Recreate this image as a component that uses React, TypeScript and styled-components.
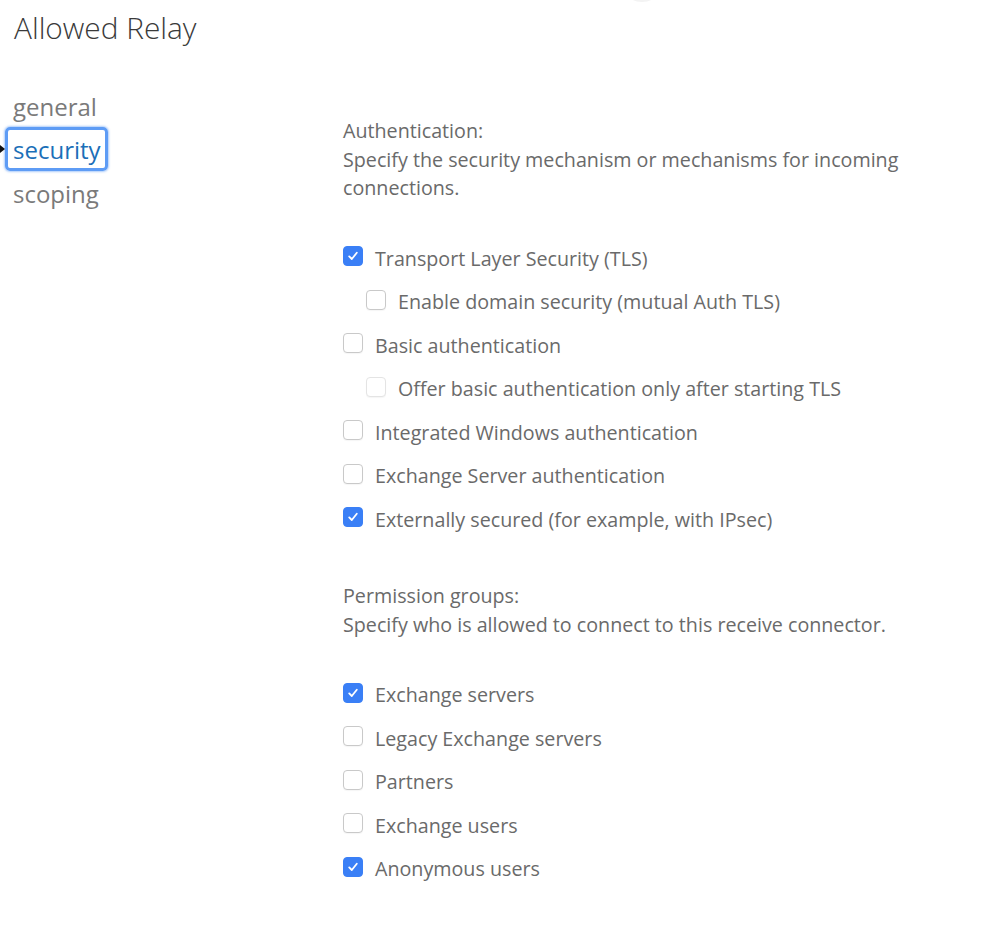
import React from "react";
import styled, { createGlobalStyle } from "styled-components";

const Global = createGlobalStyle`
  html, body { margin: 0; padding: 0; background: #fff; }
  body { font-family: "Open Sans", "Noto Sans", sans-serif; }
`;

const Page = styled.div`
  width: 998px;
  height: 946px;
  position: relative;
  overflow: hidden;
  background: #fff;
`;

const TopArc = styled.div`
  position: absolute;
  top: -14px;
  left: 628px;
  width: 28px;
  height: 16px;
  border-radius: 50%;
  background: #f3f3f3;
`;

const Title = styled.h1`
  margin: 0;
  padding: 10px 0 0 14px;
  font-size: 29.8px;
  line-height: 36px;
  font-weight: 300;
  color: #3a3a3a;
`;

const Body = styled.div`
  display: grid;
  grid-template-columns: 343px 1fr;
  margin-top: 38px;
`;

const Nav = styled.nav`
  display: flex;
  flex-direction: column;
  align-items: flex-start;
  padding-left: 8px;
`;

const NavItem = styled.div<{ $active?: boolean }>`
  position: relative;
  height: 44px;
  display: flex;
  align-items: center;
  padding: 0 4px 0 5px;
  box-sizing: border-box;
  font-size: 24px;
  color: ${(p) => (p.$active ? "#1b6fb8" : "#7a7a7a")};
  border: 3px solid ${(p) => (p.$active ? "#5e9cf5" : "transparent")};
  border-radius: 5px;
  box-shadow: ${(p) => (p.$active ? "0 0 2px 1px rgba(94,156,245,0.5)" : "none")};
  margin-left: -3px;
  margin-top: ${(p) => (p.$active ? "-1px" : "0")};
  margin-bottom: ${(p) => (p.$active ? "0.5px" : "0")};
`;

const Pointer = styled.span`
  position: absolute;
  left: -8px;
  top: 50%;
  transform: translateY(-50%);
  width: 0;
  height: 0;
  border-top: 4px solid transparent;
  border-bottom: 4px solid transparent;
  border-left: 5px solid #111;
`;

const Content = styled.div`
  padding-top: 33px;
  display: flex;
  flex-direction: column;
`;

const Section = styled.section<{ $gap?: number }>`
  margin-top: ${(p) => p.$gap ?? 0}px;
`;

const Desc = styled.p`
  margin: 0 0 34px 0;
  font-size: 19.7px;
  line-height: 28.5px;
  color: #6a6a6a;
  max-width: 600px;
`;

const Row = styled.label<{ $indent?: boolean }>`
  display: flex;
  align-items: center;
  height: 43.5px;
  padding-left: ${(p) => (p.$indent ? 23 : 0)}px;
  font-size: 19.7px;
  color: #6a6a6a;
`;

const Box = styled.span<{ $checked?: boolean; $disabled?: boolean }>`
  width: 20px;
  height: 20px;
  box-sizing: border-box;
  border-radius: 4px;
  margin-right: 12px;
  margin-top: -4px;
  flex: none;
  display: flex;
  align-items: center;
  justify-content: center;
  background: ${(p) => (p.$checked ? "#3a7ff6" : "#fff")};
  border: 1px solid
    ${(p) => (p.$checked ? "#3a7ff6" : p.$disabled ? "#e4e4e4" : "#c9c9c9")};
  box-shadow: ${(p) => (p.$checked ? "none" : "0 1px 1px rgba(0,0,0,0.04)")};
`;

type Item = { label: string; checked?: boolean; indent?: boolean; disabled?: boolean };

const Check = ({ checked, disabled }: { checked?: boolean; disabled?: boolean }) => (
  <Box $checked={checked} $disabled={disabled}>
    {checked && (
      <svg width="12" height="12" viewBox="0 0 12 12">
        <path d="M2.2 6.4 L4.8 9 L9.8 2.8" fill="none" stroke="#fff" strokeWidth="1.8" strokeLinecap="round" strokeLinejoin="round" />
      </svg>
    )}
  </Box>
);

const auth: Item[] = [
  { label: "Transport Layer Security (TLS)", checked: true },
  { label: "Enable domain security (mutual Auth TLS)", indent: true },
  { label: "Basic authentication" },
  { label: "Offer basic authentication only after starting TLS", indent: true, disabled: true },
  { label: "Integrated Windows authentication" },
  { label: "Exchange Server authentication" },
  { label: "Externally secured (for example, with IPsec)", checked: true },
];

const perms: Item[] = [
  { label: "Exchange servers", checked: true },
  { label: "Legacy Exchange servers" },
  { label: "Partners" },
  { label: "Exchange users" },
  { label: "Anonymous users", checked: true },
];

const List = ({ items }: { items: Item[] }) => (
  <div>
    {items.map((it) => (
      <Row key={it.label} $indent={it.indent}>
        <Check checked={it.checked} disabled={it.disabled} />
        {it.label}
      </Row>
    ))}
  </div>
);

export default function App() {
  return (
    <Page>
      <Global />
      <TopArc />
      <Title>Allowed Relay</Title>
      <Body>
        <Nav>
          <NavItem>general</NavItem>
          <NavItem $active>
            <Pointer />
            security
          </NavItem>
          <NavItem>scoping</NavItem>
        </Nav>
        <Content>
          <Section>
            <Desc>
              Authentication:
              <br />
              Specify the security mechanism or mechanisms for incoming connections.
            </Desc>
            <List items={auth} />
          </Section>
          <Section $gap={41}>
            <Desc>
              Permission groups:
              <br />
              Specify who is allowed to connect to this receive connector.
            </Desc>
            <List items={perms} />
          </Section>
        </Content>
      </Body>
    </Page>
  );
}
